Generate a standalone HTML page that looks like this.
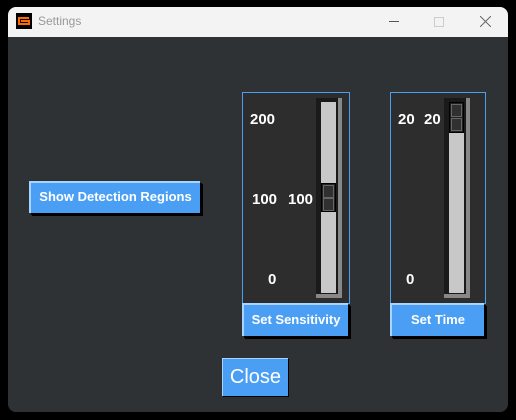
<!DOCTYPE html>
<html><head><style>
*{margin:0;padding:0;box-sizing:border-box}
body{width:516px;height:420px;background:#000;position:relative;overflow:hidden;font-family:"Liberation Sans",sans-serif}
.win{position:absolute;left:8px;top:7px;width:500px;height:405px;background:#2f3235;border-radius:8px;overflow:hidden}
.tb{position:absolute;left:0;top:0;width:500px;height:30px;background:#f3f3f3}
.abs{position:absolute}
.lbl{position:absolute;color:#fff;font-weight:bold;font-size:15px;line-height:16px}
.frame{position:absolute;border:1px solid #4a9ff5;background:#2d2d2d}
.btn{position:absolute;background:#4a9ff5;color:#fff;font-weight:bold;font-size:13px;text-align:center;border-top:2px solid #a8d4ff;border-left:2px solid #a8d4ff;box-shadow:2px 2px 0 #000 , 3px 3px 0 #000}
.trough{position:absolute;background:#1a1a1a;border-right:4px solid #888;border-bottom:4px solid #888}
.in{position:absolute;background:#c8c8c8}
.thumb{position:absolute;background:#222;border:1px solid #000}
.thumb div{position:absolute;left:1px;width:11px;height:13px;border:1px solid #666;background:#303030}
</style></head><body>
<div class="win">
 <div class="tb">
  <div class="abs" style="left:8px;top:6px;width:16px;height:16px;background:#000">
   <svg class="abs" style="left:2px;top:4px" width="12" height="8"><path d="M11 1H1V7H11V4H3" stroke="#ff6a00" stroke-width="2" fill="none"/></svg>
  </div>
  <div class="abs" style="left:30px;top:7px;font-size:12px;color:#999">Settings</div>
  <div class="abs" style="left:381px;top:14px;width:10px;height:1px;background:#555"></div>
  <div class="abs" style="left:426px;top:10px;width:10px;height:10px;border:1px solid #ccc"></div>
  <svg class="abs" style="left:472px;top:9px" width="11" height="11"><path d="M0 0L11 11M11 0L0 11" stroke="#666" stroke-width="1"/></svg>
 </div>
</div>
<div class="frame" style="left:242px;top:92px;width:108px;height:212px"></div>
<div class="lbl" style="left:250px;top:112px">200</div>
<div class="lbl" style="left:252px;top:192px">100</div>
<div class="lbl" style="left:288px;top:192px">100</div>
<div class="lbl" style="left:268px;top:272px">0</div>
<div class="trough" style="left:316px;top:98px;width:26px;height:200px"></div>
<div class="in" style="left:321px;top:102px;width:15px;height:191px"></div>
<div class="thumb" style="left:321px;top:183px;width:15px;height:29px"><div style="top:1px"></div><div style="top:14px"></div></div>
<div class="btn" style="left:242px;top:303px;width:106px;height:33px;line-height:29px">Set Sensitivity</div>

<div class="frame" style="left:390px;top:92px;width:96px;height:212px"></div>
<div class="lbl" style="left:398px;top:112px">20</div>
<div class="lbl" style="left:424px;top:112px">20</div>
<div class="lbl" style="left:406px;top:272px">0</div>
<div class="trough" style="left:444px;top:98px;width:26px;height:200px"></div>
<div class="in" style="left:449px;top:102px;width:15px;height:191px"></div>
<div class="thumb" style="left:449px;top:102px;width:15px;height:31px"><div style="top:1px"></div><div style="top:15px"></div></div>
<div class="btn" style="left:390px;top:303px;width:94px;height:33px;line-height:29px">Set Time</div>

<div class="btn" style="left:29px;top:181px;width:171px;height:32px;line-height:28px">Show Detection Regions</div>
<div class="abs" style="left:222px;top:358px;width:66px;height:38px;background:#4a9ff5;border-top:1px solid #a8d4ff;border-left:1px solid #a8d4ff;box-shadow:1px 1px 0 #000;color:#fff;font-size:20px;line-height:36px;text-align:center">Close</div>
</body></html>
